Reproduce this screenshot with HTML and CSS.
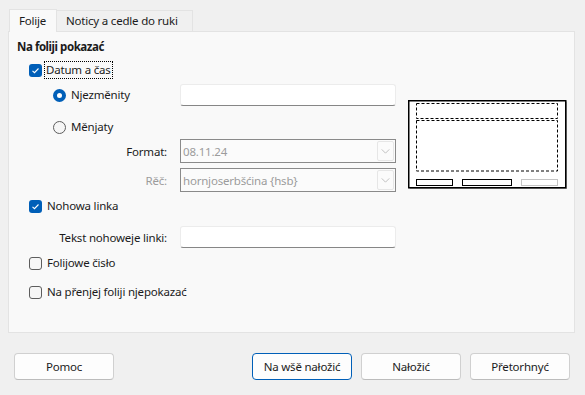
FILE: index.html
```html
<!DOCTYPE html>
<html>
<head>
<meta charset="utf-8">
<link rel="stylesheet" href="styles.css">
</head>
<body>
<div class="page">
  <div class="tabs">
    <div class="tab active">Folije</div>
    <div class="tab">Noticy a cedle do ruki</div>
  </div>
  <div class="panel">
    <div class="form">
      <div class="title">Na foliji pokazać</div>
      <div class="row r-datum check-row">
        <span class="cb checked"><svg viewBox="0 0 13 13" width="13" height="13"><path d="M3.5 6.8 L5.5 8.7 L9.5 4.5" fill="none" stroke="#fff" stroke-width="1.1"/></svg></span>
        <span class="lbl focus">Datum a čas</span>
      </div>
      <div class="grid r-fixed">
        <div class="radio-cell"><span class="rb checked"></span><span class="lbl">Njezměnity</span></div>
        <div class="edit"></div>
      </div>
      <div class="row r-var radio-row">
        <span class="rb"></span><span class="lbl">Měnjaty</span>
      </div>
      <div class="grid r-format">
        <div class="rlabel">Format:</div>
        <div class="combo"><span class="combo-text">08.11.24</span><span class="combo-btn"><svg viewBox="0 0 10 6" width="9" height="5"><path d="M0.5 0.5 L5 5 L9.5 0.5" fill="none" stroke="#b4b4b4" stroke-width="1"/></svg></span></div>
      </div>
      <div class="grid r-lang">
        <div class="rlabel disabled">Rěč:</div>
        <div class="combo"><span class="combo-text">hornjoserbšćina {hsb}</span><span class="combo-btn"><svg viewBox="0 0 10 6" width="9" height="5"><path d="M0.5 0.5 L5 5 L9.5 0.5" fill="none" stroke="#b4b4b4" stroke-width="1"/></svg></span></div>
      </div>
      <div class="row r-foot check-row">
        <span class="cb checked"><svg viewBox="0 0 13 13" width="13" height="13"><path d="M3.5 6.8 L5.5 8.7 L9.5 4.5" fill="none" stroke="#fff" stroke-width="1.1"/></svg></span>
        <span class="lbl">Nohowa linka</span>
      </div>
      <div class="grid r-text">
        <div class="rlabel">Tekst nohoweje linki:</div>
        <div class="edit"></div>
      </div>
      <div class="row r-num check-row">
        <span class="cb"></span><span class="lbl">Folijowe čisło</span>
      </div>
      <div class="row r-first check-row">
        <span class="cb"></span><span class="lbl">Na přenjej foliji njepokazać</span>
      </div>
    </div>
    <div class="preview">
      <svg width="160" height="90" viewBox="0 0 160 90">
        <rect x="1.5" y="1.5" width="157.5" height="87.5" fill="#a8a8a8"/>
        <rect x="0.75" y="0.75" width="157" height="87" fill="#fff" stroke="#000" stroke-width="1.5"/>
        <rect x="8.5" y="3.5" width="141" height="15" fill="none" stroke="#000" stroke-width="1" stroke-dasharray="3 2"/>
        <rect x="8.5" y="20.5" width="141" height="50.5" fill="none" stroke="#000" stroke-width="1" stroke-dasharray="3 2"/>
        <rect x="8.5" y="79.5" width="36" height="6" fill="none" stroke="#000" stroke-width="1"/>
        <rect x="54.5" y="79.5" width="49" height="6" fill="none" stroke="#000" stroke-width="1"/>
        <rect x="113.5" y="79.5" width="36" height="6" fill="none" stroke="#c4c4c4" stroke-width="1"/>
      </svg>
    </div>
  </div>
  <div class="buttons">
    <button class="btn">Pomoc</button>
    <div class="spacer"></div>
    <button class="btn default">Na wšě nałožić</button>
    <button class="btn">Nałožić</button>
    <button class="btn">Přetorhnyć</button>
  </div>
</div>
</body>
</html>
```

FILE: styles.css
```css
* { box-sizing: border-box; }
html, body {
  margin: 0;
  padding: 0;
  width: 585px;
  height: 395px;
  overflow: hidden;
  background: #f0f0f0;
  font-family: "Segoe UI", "Noto Sans", "Open Sans", sans-serif;
  font-size: 11.5px;
  letter-spacing: -0.2px;
  color: #1b1b1b;
}
.page {
  padding: 9px 10px 0 8px;
}
.tabs {
  display: flex;
  align-items: flex-end;
  height: 22px;
  padding-left: 1px;
}
.tab {
  height: 21px;
  line-height: 20px;
  padding: 0 9px;
  border: 1px solid #e3e3e3;
  border-left: none;
  border-bottom: none;
  background: #f0f0f0;
  width: 136px;
  white-space: nowrap;
}
.tab.active {
  position: relative;
  z-index: 1;
  width: 48px;
  height: 23px;
  margin-bottom: -1px;
  line-height: 22px;
  background: #f9f9f9;
  border-left: 1px solid #e3e3e3;
}
.panel {
  width: 567px;
  height: 302px;
  background: #f9f9f9;
  border: 1px solid #e3e3e3;
  display: flex;
}
.form {
  width: 399px;
  padding: 7px 0 0 8px;
  display: flex;
  flex-direction: column;
}
.title {
  height: 16px;
  line-height: 16px;
  font-weight: bold;
  letter-spacing: -0.45px;
}
.row {
  display: flex;
  align-items: center;
  height: 16px;
}
.check-row { padding-left: 12px; }
.radio-row { padding-left: 36px; }
.grid {
  display: grid;
  grid-template-columns: 150px 216px;
  column-gap: 13px;
  align-items: center;
}
.r-datum { margin-top: 7px; }
.r-fixed { margin-top: 6px; height: 22px; }
.r-var { margin-top: 13px; }
.r-format { margin-top: 4px; height: 24px; }
.r-lang { margin-top: 5px; height: 24px; }
.r-foot { margin-top: 6px; }
.r-text { margin-top: 12px; height: 22px; }
.r-num { margin-top: 7px; }
.r-first { margin-top: 13px; }

.radio-cell {
  display: flex;
  align-items: center;
  padding-left: 36px;
}
.lbl {
  margin-left: 5px;
  line-height: 16px;
  white-space: nowrap;
}
.lbl.focus {
  margin-left: 3px;
  padding: 0 1px;
  outline: 1px dotted #000;
  outline-offset: 0;
}
.rlabel {
  text-align: right;
  white-space: nowrap;
}
.rlabel.disabled { color: #9c9c9c; }

.cb {
  width: 13px;
  height: 13px;
  border-radius: 3px;
  border: 1px solid #5d5d5d;
  background: #f6f6f6;
  flex: none;
}
.cb.checked {
  border: none;
  background: #005fb8;
}
.cb svg { display: block; }

.rb {
  width: 13px;
  height: 13px;
  border-radius: 50%;
  border: 1px solid #5d5d5d;
  background: #f6f6f6;
  flex: none;
}
.rb.checked {
  border: 4px solid #005fb8;
  background: #fff;
}

.edit {
  height: 22px;
  background: #fff;
  border: 1px solid #ececec;
  border-bottom: 1px solid #868686;
  border-radius: 3px;
}
.combo {
  height: 24px;
  border: 1px solid #8a8a8a;
  background: #fbfbfb;
  display: flex;
  align-items: center;
  color: #9c9c9c;
  padding: 1px;
}
.combo-text {
  flex: 1;
  padding-left: 1px;
  white-space: nowrap;
}
.combo-btn {
  width: 17px;
  height: 20px;
  border: 1px solid #e6e6e6;
  border-radius: 2px;
  display: flex;
  align-items: center;
  justify-content: center;
}
.combo-btn svg { display: block; }

.preview {
  margin-top: 68px;
}
.preview svg { display: block; }

.buttons {
  display: flex;
  margin-top: 20px;
  padding-left: 6px;
  gap: 9px;
  padding-right: 5px;
}
.spacer { flex: 1; }
.btn {
  width: 100px;
  height: 27px;
  background: #fdfdfd;
  border: 1px solid #d0d0d0;
  border-bottom-color: #bcbcbc;
  border-radius: 4px;
  font-family: inherit;
  font-size: 11.5px;
  letter-spacing: -0.2px;
  color: #1b1b1b;
  padding: 0;
}
.btn.default {
  border: 1px solid #005fb8;
}
```
